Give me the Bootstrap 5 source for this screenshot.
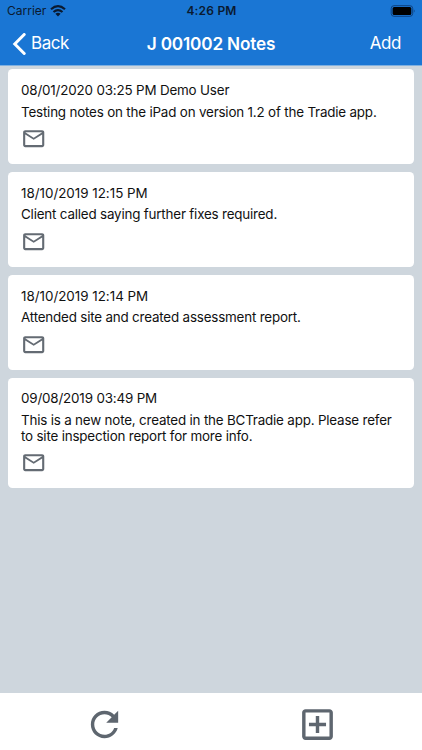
<!DOCTYPE html>
<html lang="en">
<head>
<meta charset="utf-8">
<meta name="viewport" content="width=device-width, initial-scale=1">
<title>J 001002 Notes</title>
<link rel="stylesheet" href="https://cdn.jsdelivr.net/npm/bootstrap@5.3.0/dist/css/bootstrap.min.css">
<style>
body { font-family: Inter, "Liberation Sans", sans-serif; background: #ced6dd; color: #111; }
.app-top { background: #1a76d4; height: 66px; border-bottom: 1px solid #7fb0e0; }
.status-row { height: 22px; font-size: 12px; line-height: 22px; color: #0a1a30; padding-left: 7px; padding-right: 6px; }
.clock { font-weight: 600; letter-spacing: .2px; }
.title-row { height: 43px; font-size: 17px; line-height: 43px; color: #fff; padding-left: 12px; padding-right: 12px; }
.side { flex: 1 1 0; }
.nav-label { letter-spacing: -.45px; }
.add { margin-right: 9px; }
.page-title { font-weight: 600; font-size: 17.2px; letter-spacing: -.18px; }
.notes { padding: 3.4px 8.3px 0; gap: 8px; }
.note { border-radius: 4.5px; padding: 11.65px 12.7px 12.9px; font-size: 13.4px; }
.stamp { line-height: 18px; letter-spacing: -.01px; }
.stamp-wide { letter-spacing: -.17px; }
.message { line-height: 15.7px; margin-top: 5.5px; letter-spacing: -.187px; }
.mail { width: 25.4px; height: 25.4px; margin-top: 5.7px; fill: #646b73; }
.app-bottom { height: 57.5px; padding: 5.5px 0 0; }
.app-bottom svg { fill: #5e666f; }
.tool-left { padding-right: 3px; }
.tool-right { padding-left: 2px; }
</style>
<script src="https://cdn.jsdelivr.net/npm/bootstrap@5.3.0/dist/js/bootstrap.bundle.min.js"></script>
</head>
<body>
<svg class="d-none"><symbol id="mail" viewBox="0 0 24 24"><path d="M22 6c0-1.100-.9-2-2-2H4c-1.100 0-2 .9-2 2v12c0 1.100.9 2 2 2h16c1.100 0 2-.9 2-2V6zm-2 0-8 5-8-5h16zm0 12H4V8l8 5 8-5v10z"/></symbol></svg>
<div class="vh-100 d-flex flex-column overflow-hidden">
  <header class="app-top flex-shrink-0">
    <div class="status-row d-flex align-items-center">
      <div class="side d-flex align-items-center"><span class="carrier">Carrier</span>
        <svg class="ms-1" width="16" height="12" viewBox="0 0 16 12" fill="none" stroke="#0a1a30" stroke-width="2.200"><path d="M1 4.300Q8-1.900 15 4.300M3.500 7Q8 3.200 12.500 7"/><path d="M5.400 8.800Q8 6.800 10.600 8.800L8 11.500Z" fill="#0a1a30" stroke="none"/></svg>
      </div>
      <span class="clock">4:26 PM</span>
      <div class="side d-flex justify-content-end">
        <svg width="26" height="12" viewBox="0 0 26 12"><rect x="1.200" y=".7" width="21.500" height="10.600" rx="2.800" fill="none" stroke="#0d4280"/><rect x="2.600" y="2.100" width="18.700" height="7.800" rx="1.500" fill="#000"/><path d="M23.900 4.200q1.700 1.800 0 3.600z" fill="#0d4280"/></svg>
      </div>
    </div>
    <nav class="title-row d-flex align-items-center">
      <div class="side d-flex align-items-center"><svg width="15" height="22" viewBox="0 0 15 22" fill="none" stroke="#fff" stroke-width="3" stroke-linecap="round"><path d="M12.200 1.500 2.800 11l9.400 9.500"/></svg><span class="ms-1 nav-label">Back</span></div>
      <span class="page-title">J 001002 Notes</span>
      <div class="side text-end nav-label"><span class="add">Add</span></div>
    </nav>
  </header>
  <main class="notes flex-grow-1 d-flex flex-column">
    <article class="note bg-white"><div class="stamp stamp-wide">08/01/2020 03:25 PM Demo User</div><div class="message">Testing notes on the iPad on version 1.2 of the Tradie app.</div><svg class="mail d-block"><use href="#mail"/></svg></article>
    <article class="note bg-white"><div class="stamp">18/10/2019 12:15 PM</div><div class="message">Client called saying further fixes required.</div><svg class="mail d-block"><use href="#mail"/></svg></article>
    <article class="note bg-white"><div class="stamp">18/10/2019 12:14 PM</div><div class="message">Attended site and created assessment report.</div><svg class="mail d-block"><use href="#mail"/></svg></article>
    <article class="note bg-white"><div class="stamp stamp-wide">09/08/2019 03:49 PM</div><div class="message">This is a new note, created in the BCTradie app. Please refer<br>to site inspection report for more info.</div><svg class="mail d-block"><use href="#mail"/></svg></article>
  </main>
  <footer class="app-bottom bg-white flex-shrink-0 d-flex align-items-center">
    <div class="w-50 d-flex justify-content-center tool-left"><svg width="41" height="41" viewBox="0 0 24 24"><path d="M17.650 6.350C16.200 4.900 14.210 4 12 4c-4.420 0-7.990 3.580-7.990 8s3.570 8 7.990 8c3.730 0 6.840-2.550 7.730-6h-2.080c-.82 2.330-3.040 4-5.650 4-3.310 0-6-2.690-6-6s2.690-6 6-6c1.660 0 3.140.69 4.220 1.780L13 11h7V4l-2.350 2.350z"/></svg></div>
    <div class="w-50 d-flex justify-content-center tool-right"><svg width="41" height="41" viewBox="0 0 24 24"><path d="M19 3H5c-1.110 0-2 .9-2 2v14c0 1.100.89 2 2 2h14c1.100 0 2-.9 2-2V5c0-1.100-.9-2-2-2zm0 16H5V5h14v14zm-8-2h2v-4h4v-2h-4V7h-2v4H7v2h4z"/></svg></div>
  </footer>
</div>
</body>
</html>
